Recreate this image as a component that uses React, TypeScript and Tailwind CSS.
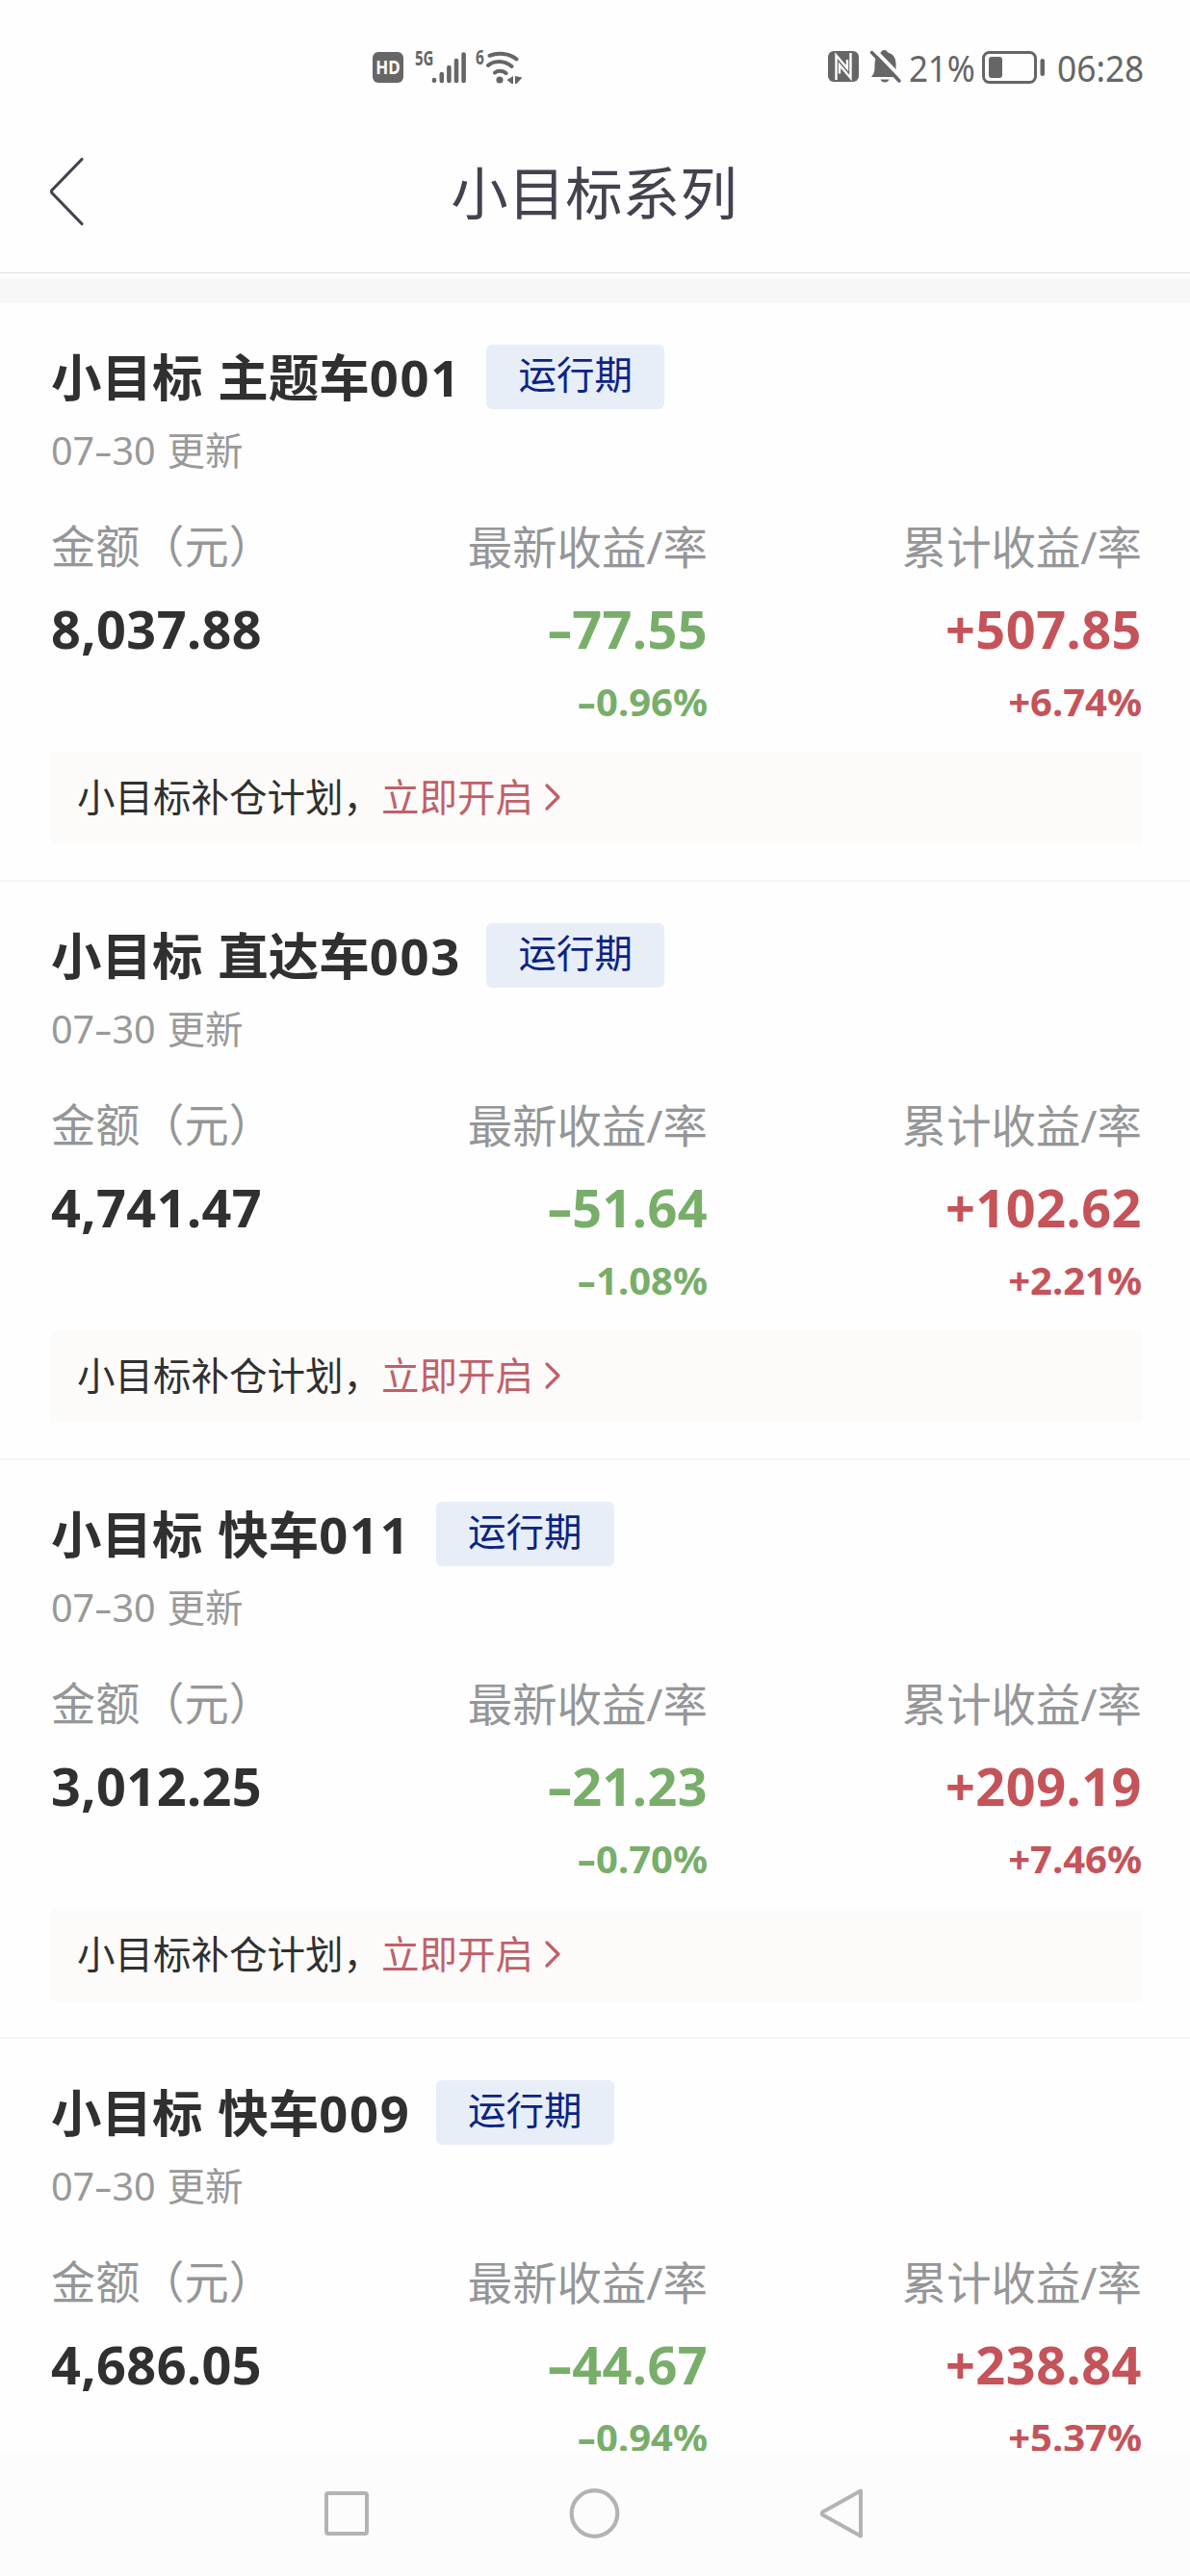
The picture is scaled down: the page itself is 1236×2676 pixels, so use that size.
type Fund = {
  name: string;
  code: string;
  amount: string;
  latest: string;
  latestRate: string;
  total: string;
  totalRate: string;
  plan: boolean;
};

const funds: Fund[] = [
  { name: "小目标 主题车", code: "001", amount: "8,037.88", latest: "-77.55", latestRate: "-0.96%", total: "+507.85", totalRate: "+6.74%", plan: true },
  { name: "小目标 直达车", code: "003", amount: "4,741.47", latest: "-51.64", latestRate: "-1.08%", total: "+102.62", totalRate: "+2.21%", plan: true },
  { name: "小目标 快车", code: "011", amount: "3,012.25", latest: "-21.23", latestRate: "-0.70%", total: "+209.19", totalRate: "+7.46%", plan: true },
  { name: "小目标 快车", code: "009", amount: "4,686.05", latest: "-44.67", latestRate: "-0.94%", total: "+238.84", totalRate: "+5.37%", plan: false },
];

function StatusBar() {
  return (
    <div className="flex h-[140px] shrink-0 items-start justify-between pt-[48px] pr-[49px] pl-[387px] text-[#666666]">
      <div className="flex h-[44px] items-center">
        <div className="flex h-[32px] w-[32px] items-center justify-center rounded-[6px] bg-[#666666] text-[17px] font-bold text-white">
          <span className="inline-block scale-y-115">HD</span>
        </div>
        <span className="-mt-[20px] ml-[12px] inline-block w-[18px] origin-left scale-x-[0.7] text-[21.5px] leading-[20px] font-bold">5G</span>
        <svg className="-mt-[1px] -ml-[1px]" width="38" height="36" viewBox="0 0 38 36" stroke="#666666" strokeWidth="4.6" strokeLinecap="round">
          <path d="M3 31v.8M10.800 25v7M18.400 18v14M26 11v21M33.600 4.500v27.500" />
        </svg>
        <span className="-mt-[22px] ml-[8px] inline-block w-[10px] origin-left scale-x-[0.72] text-[21.5px] leading-[20px] font-bold">6</span>
        <svg className="-mt-[1px] -ml-[1px]" width="42" height="36" viewBox="0 0 42 36" fill="none" stroke="#666666" strokeWidth="4" strokeLinecap="round">
          <path d="M5.500 5.800C14 2.500 26 3 33.500 9.500M4 16C10 10.500 21 10.500 28.500 17M11 23.500C14 21 19.500 21 22.500 24" />
          <circle cx="16" cy="31" r="3.600" fill="#666666" stroke="none" />
          <path d="M30 27v8h-1.500l-5-4zM32 27l7.500 1.500-6 6.500H32z" fill="#666666" stroke="none" />
        </svg>
      </div>
      <div className="flex h-[44px] items-center text-[38px] leading-[44px]">
        <svg className="-mt-[2px]" width="32" height="32" viewBox="0 0 32 32">
          <rect width="32" height="32" rx="6" fill="#666666" />
          <path d="M8.500 30V4.500L20 18V9M23.500 2v26L12 14.500v9" fill="none" stroke="#fff" strokeWidth="2.400" />
        </svg>
        <svg className="-mt-[2px] ml-[11px]" width="34" height="36" viewBox="0 0 34 36" fill="#666666">
          <path d="M15.500 1c2 0 3 1 3.500 2.500 6 1.500 8.500 6 8.500 12 0 7 .5 9 2.500 13.500H2c3-4 3.500-5 3.500-12C5.500 10 8 5 12 3.500 12.500 2 13.500 1 15.500 1z" />
          <path d="M11.500 31.500h9c-1 4-8 4-9 0z" />
          <path d="M4 -.5 35 31.500" stroke="#fefefe" strokeWidth="4" />
          <path d="M2.500 3.500 31 33" stroke="#666666" strokeWidth="3.500" strokeLinecap="round" />
        </svg>
        <span className="-mt-[1px] ml-[7px] inline-block w-[72px] origin-left scale-x-[0.92] tracking-[-0.2px]">21%</span>
        <svg className="-mt-[1px] ml-[4px]" width="66" height="34" viewBox="0 0 66 34" fill="#666666">
          <rect x="1.500" y="1.500" width="54" height="31" rx="6" fill="none" stroke="#666666" strokeWidth="3" />
          <rect x="7" y="6" width="14" height="22" rx="3" />
          <rect x="60.500" y="8" width="4.500" height="18" rx="2.250" />
        </svg>
        <span className="-mt-[1px] ml-[12px] inline-block w-[89px] origin-left scale-x-[0.93]">06:28</span>
      </div>
    </div>
  );
}

function Header() {
  return (
    <header className="grid h-[144px] shrink-0 grid-cols-[100px_1fr_100px] items-start border-b border-[#dddddd] text-[#45424f]">
      <svg className="mt-[22px] ml-[50px]" width="38" height="74" viewBox="0 0 38 74" fill="none" stroke="#45424f" strokeWidth="3.200" strokeLinecap="round" strokeLinejoin="round">
        <path d="M35 3.500 4 35.500q-1 1.500 0 3L35 70.500" />
      </svg>
      <h1 className="mt-[20px] -ml-[2px] text-center text-[59.5px] leading-[80px]">小目标系列</h1>
    </header>
  );
}

/** Draws a figure whose minus sign or date dash is wider than the font's own hyphen. */
function Figure({ value }: { value: string }) {
  const [head, tail] = value.split("-");
  if (tail === undefined) return <>{value}</>;
  return (
    <>
      {head}
      <span className="mx-[0.07em] inline-block scale-x-[1.5]">-</span>
      {tail}
    </>
  );
}

function FundCard({ fund }: { fund: Fund }) {
  return (
    <section className="h-[601px] shrink-0 border-b-2 border-[#f5f5f5] pt-[43px] pr-[50px] pl-[53px]">
      <div className="flex h-[67px] items-center">
        <h2 className="text-[52.5px] leading-[67px] font-bold whitespace-pre text-[#303030] [word-spacing:2px]">
          {fund.name}
          <span className="tracking-[1.8px]">{fund.code}</span>
        </h2>
        <span className="ml-[26px] flex h-[67px] w-[185px] items-center justify-center rounded-[6px] bg-[#e7eef8] pb-[5px] text-[39.5px] leading-[60px] text-[#0c2384]">运行期</span>
      </div>
      <p className="mt-[15px] h-[56px] text-[39.5px] leading-[56px] text-[#999999] [word-spacing:1.5px]">
        <Figure value="07-30" /> 更新
      </p>
      <div className="mt-[42px] grid h-[211px] grid-cols-[231px_451px_451px] text-right">
        <div className="text-left whitespace-nowrap">
          <div className="h-[60px] text-[46.2px] leading-[60px] text-[#959698]">金额（元）</div>
          <div className="mt-[25px] h-[60px] text-[54px] leading-[60px] font-bold tracking-[0.4px] text-[#303030]">{fund.amount}</div>
        </div>
        <div className="text-[#78ae6a]">
          <div className="h-[60px] text-[46.4px] leading-[60px] text-[#959698]">最新收益/率</div>
          <div className="mt-[25px] h-[60px] text-[54px] leading-[60px] font-bold tracking-[0.4px]"><Figure value={fund.latest} /></div>
          <div className="mt-[26px] h-[40px] text-[40px] leading-[40px] font-bold"><Figure value={fund.latestRate} /></div>
        </div>
        <div className="text-[#c5535a]">
          <div className="h-[60px] text-[46.4px] leading-[60px] text-[#959698]">累计收益/率</div>
          <div className="mt-[25px] h-[60px] text-[54px] leading-[60px] font-bold tracking-[0.5px]">{fund.total}</div>
          <div className="mt-[26px] h-[40px] text-[40px] leading-[40px] font-bold">{fund.totalRate}</div>
        </div>
      </div>
      {fund.plan && (
        <div className="mt-[32px] flex h-[96px] items-center bg-[#fcfbf9] pb-[2px] pl-[27px] text-[39.5px] leading-[60px] text-[#303030]">
          <span>小目标补仓计划，</span>
          <span className="text-[#c0606a]">立即开启</span>
          <svg className="ml-[11px]" width="20" height="32" viewBox="0 0 20 32" fill="none" stroke="#c0606a" strokeWidth="3.200" strokeLinecap="round" strokeLinejoin="round">
            <path d="m3 4 12 12L3 28" />
          </svg>
        </div>
      )}
    </section>
  );
}

function NavBar() {
  return (
    <nav className="flex h-[130px] shrink-0 items-start bg-[#fcfcfc] pt-[38px] pl-[334px]">
      <svg width="52" height="54" viewBox="0 0 52 54" fill="none" stroke="#b3b3b3" strokeWidth="4">
        <rect x="5" y="6" width="42" height="42" rx="2" />
      </svg>
      <svg className="ml-[204px]" width="56" height="54" viewBox="0 0 56 54" fill="none" stroke="#b3b3b3" strokeWidth="4.200">
        <circle cx="27.500" cy="27" r="23.800" />
      </svg>
      <svg className="ml-[204px]" width="50" height="54" viewBox="0 0 50 54" fill="none" stroke="#b3b3b3" strokeWidth="4" strokeLinejoin="round">
        <path d="M44 3.500v47L4.500 28.500q-1.500-1.500 0-3z" />
      </svg>
    </nav>
  );
}

export default function App() {
  return (
    <div className="flex h-[2676px] w-[1236px] flex-col overflow-hidden bg-[#fefefe] font-['Noto_Sans','Noto_Sans_CJK_SC',sans-serif]">
      <StatusBar />
      <Header />
      <main className="flex min-h-0 flex-1 flex-col overflow-hidden pt-[5px]">
        <div className="h-[26px] shrink-0 bg-[#f7f7f7]" />
        {funds.map((fund) => (
          <FundCard key={fund.code} fund={fund} />
        ))}
      </main>
      <NavBar />
    </div>
  );
}
